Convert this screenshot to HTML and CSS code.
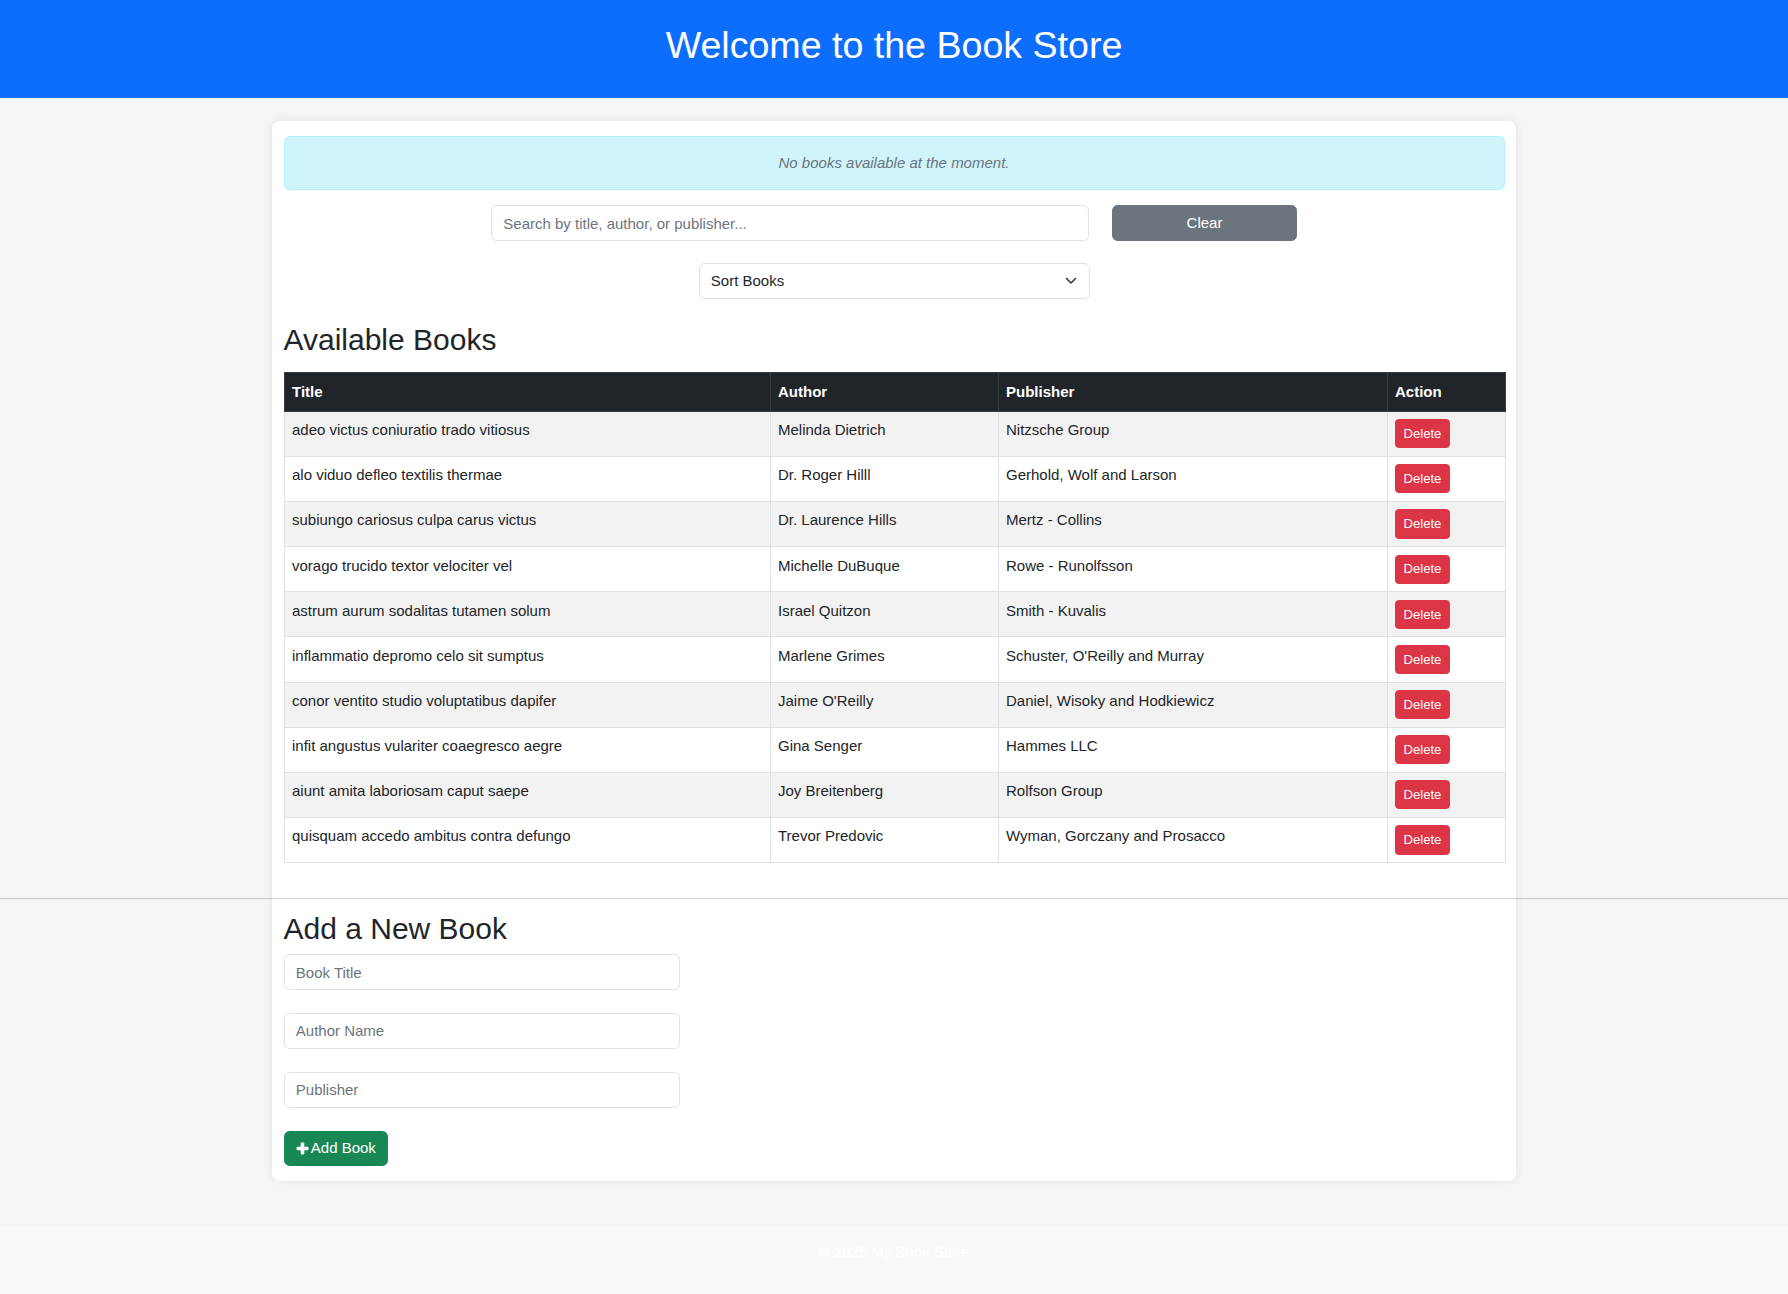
FILE: index.html
```html
<!DOCTYPE html>
<html lang="en">
<head>
<meta charset="utf-8">
<title>Book Store</title>
<link rel="stylesheet" href="styles.css">
</head>
<body>
<header class="site-header">
  <h1 class="site-title">Welcome to the Book Store</h1>
</header>

<main class="card">
  <div class="alert">No books available at the moment.</div>

  <div class="search-row">
    <input class="form-control search-input" type="text" placeholder="Search by title, author, or publisher...">
    <button class="btn btn-secondary clear-btn" type="button">Clear</button>
  </div>

  <div class="sort-wrap">
    <select class="form-control sort-select">
      <option>Sort Books</option>
      <option>Title</option>
      <option>Author</option>
      <option>Publisher</option>
    </select>
    <svg class="chevron" width="12" height="8" viewBox="0 0 12 8" aria-hidden="true"><path d="M1.5 1.5 L6 6 L10.5 1.5" fill="none" stroke="#343a40" stroke-width="1.6" stroke-linecap="round" stroke-linejoin="round"/></svg>
  </div>

  <h2 class="section-title">Available Books</h2>

  <table class="books">
    <colgroup>
      <col class="col-title">
      <col class="col-author">
      <col class="col-publisher">
      <col class="col-action">
    </colgroup>
    <thead>
      <tr><th>Title</th><th>Author</th><th>Publisher</th><th>Action</th></tr>
    </thead>
    <tbody>
      <tr><td>adeo victus coniuratio trado vitiosus</td><td>Melinda Dietrich</td><td>Nitzsche Group</td><td><button class="btn-delete" type="button">Delete</button></td></tr>
      <tr><td>alo viduo defleo textilis thermae</td><td>Dr. Roger Hilll</td><td>Gerhold, Wolf and Larson</td><td><button class="btn-delete" type="button">Delete</button></td></tr>
      <tr><td>subiungo cariosus culpa carus victus</td><td>Dr. Laurence Hills</td><td>Mertz - Collins</td><td><button class="btn-delete" type="button">Delete</button></td></tr>
      <tr><td>vorago trucido textor velociter vel</td><td>Michelle DuBuque</td><td>Rowe - Runolfsson</td><td><button class="btn-delete" type="button">Delete</button></td></tr>
      <tr><td>astrum aurum sodalitas tutamen solum</td><td>Israel Quitzon</td><td>Smith - Kuvalis</td><td><button class="btn-delete" type="button">Delete</button></td></tr>
      <tr><td>inflammatio depromo celo sit sumptus</td><td>Marlene Grimes</td><td>Schuster, O'Reilly and Murray</td><td><button class="btn-delete" type="button">Delete</button></td></tr>
      <tr><td>conor ventito studio voluptatibus dapifer</td><td>Jaime O'Reilly</td><td>Daniel, Wisoky and Hodkiewicz</td><td><button class="btn-delete" type="button">Delete</button></td></tr>
      <tr><td>infit angustus vulariter coaegresco aegre</td><td>Gina Senger</td><td>Hammes LLC</td><td><button class="btn-delete" type="button">Delete</button></td></tr>
      <tr><td>aiunt amita laboriosam caput saepe</td><td>Joy Breitenberg</td><td>Rolfson Group</td><td><button class="btn-delete" type="button">Delete</button></td></tr>
      <tr><td>quisquam accedo ambitus contra defungo</td><td>Trevor Predovic</td><td>Wyman, Gorczany and Prosacco</td><td><button class="btn-delete" type="button">Delete</button></td></tr>
    </tbody>
  </table>

  <hr class="divider">

  <h2 class="section-title add-title">Add a New Book</h2>
  <form class="add-form">
    <input class="form-control add-input" type="text" placeholder="Book Title">
    <input class="form-control add-input" type="text" placeholder="Author Name">
    <input class="form-control add-input" type="text" placeholder="Publisher">
    <button class="btn btn-success add-btn" type="button"><svg class="plus" width="13" height="13" viewBox="0 0 13 13" aria-hidden="true"><rect x="4.7" y="0.5" width="3.6" height="12" rx="1.2" fill="#fff"/><rect x="0.5" y="4.7" width="12" height="3.6" rx="1.2" fill="#fff"/></svg>Add Book</button>
  </form>
</main>

<footer class="site-footer">
  <p class="footer-text">© 2025 My Book Store</p>
</footer>
</body>
</html>
```

FILE: styles.css
```css
* { box-sizing: border-box; }

html, body {
  margin: 0;
  padding: 0;
}

body {
  background: #f5f5f5;
  font-family: "Liberation Sans", Arial, Helvetica, sans-serif;
  font-size: 15px;
  line-height: 1.5;
  color: #212529;
  overflow-x: hidden;
}

.site-header {
  background: #0d6efd;
  color: #fff;
  text-align: center;
  padding: 22.5px 0;
}

.site-title {
  margin: 0 0 7.5px;
  font-size: 37.6px;
  line-height: 1.2;
  font-weight: 400;
}

.card {
  width: 1244px;
  margin: 23px auto 45px;
  background: #fff;
  border-radius: 8px;
  padding: 15px 11.5px;
  box-shadow: 0 0 10px rgba(0, 0, 0, 0.08);
}

.alert {
  background: #cff4fc;
  border: 1px solid #b6effb;
  border-radius: 5.6px;
  padding: 15px;
  text-align: center;
  font-style: italic;
  color: #6c757d;
  margin-bottom: 15px;
}

.form-control {
  display: block;
  height: 35.8px;
  padding: 5.6px 11.3px;
  font-family: inherit;
  font-size: 15px;
  line-height: 1.5;
  color: #212529;
  background: #fff;
  border: 1px solid #dee2e6;
  border-radius: 5.6px;
  outline: none;
}

.form-control::placeholder {
  color: #6c757d;
  opacity: 1;
}

.btn {
  display: inline-block;
  height: 35.8px;
  padding: 5.6px 11.3px;
  font-family: inherit;
  font-size: 15px;
  line-height: 1.5;
  color: #fff;
  border-radius: 5.6px;
  cursor: pointer;
}

.btn-secondary {
  background: #6c757d;
  border: 1px solid #6c757d;
}

.btn-success {
  background: #198754;
  border: 1px solid #198754;
}

.search-row {
  display: flex;
  justify-content: center;
  gap: 23px;
  margin-bottom: 22.5px;
}

.search-input {
  width: 598px;
}

.clear-btn {
  width: 185px;
}

.sort-wrap {
  position: relative;
  width: 391px;
  margin: 0 auto 23px;
}

.sort-select {
  width: 100%;
  -webkit-appearance: none;
  appearance: none;
  cursor: pointer;
}

.chevron {
  position: absolute;
  right: 13px;
  top: 14px;
  pointer-events: none;
}

.section-title {
  margin: 0 0 14px;
  font-size: 30px;
  line-height: 1.2;
  font-weight: 400;
  color: #212529;
}

.books {
  width: 100%;
  table-layout: fixed;
  border-collapse: collapse;
  margin-bottom: 35px;
  font-size: 15px;
  line-height: 1.5;
}

.col-title { width: 486px; }
.col-author { width: 228px; }
.col-publisher { width: 389px; }
.col-action { width: 118px; }

.books th,
.books td {
  padding: 7.5px;
  text-align: left;
  vertical-align: top;
  border: 1px solid #dee2e6;
}

.books th {
  background: #212529;
  color: #fff;
  font-weight: 700;
  border-color: #373b3e;
}

.books tbody tr:nth-child(odd) td {
  background: #f2f2f2;
}

.books tbody tr:nth-child(even) td {
  background: #fff;
}

.btn-delete {
  display: inline-block;
  vertical-align: top;
  padding: 3.76px 7.5px;
  font-family: inherit;
  font-size: 13.1px;
  line-height: 1.5;
  color: #fff;
  background: #dc3545;
  border: 1px solid #dc3545;
  border-radius: 3.76px;
  cursor: pointer;
}

.divider {
  width: 100vw;
  margin: 0 0 12px calc(50% - 50vw);
  border: 0;
  border-top: 1px solid rgba(0, 0, 0, 0.17);
  height: 0;
}

.add-title {
  margin-bottom: 7px;
}

.add-form {
  margin: 0;
}

.add-input {
  width: 396px;
  margin-bottom: 23px;
}

.add-input:last-of-type {
  margin-bottom: 23px;
}

.add-btn {
  display: inline-flex;
  align-items: center;
  gap: 2px;
}

.plus {
  display: block;
}

.site-footer {
  background: #f8f9fa;
  text-align: center;
  padding: 15px;
  color: #fff;
}

.footer-text {
  margin: 0 0 15px;
}
```
